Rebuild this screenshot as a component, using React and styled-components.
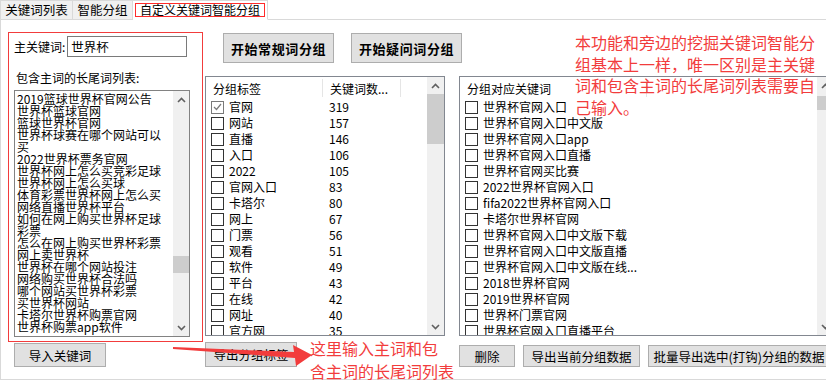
import React from "react";
import styled, { createGlobalStyle } from "styled-components";

const GlobalStyle = createGlobalStyle`
  html, body {
    margin: 0;
    padding: 0;
    background: #fff;
  }
  body {
    font-family: "Noto Sans CJK SC", "Liberation Sans", sans-serif;
    font-size: 12px;
    color: #000;
  }
`;

const Page = styled.div`
  position: relative;
  width: 826px;
  height: 388px;
  overflow: hidden;
  background: #fff;
`;

const TabBar = styled.div`
  display: flex;
  height: 20px;
  box-sizing: border-box;
`;

const Tab = styled.div`
  width: ${(p) => p.$w}px;
  height: 20px;
  box-sizing: border-box;
  display: flex;
  align-items: center;
  justify-content: center;
  font-size: 12.5px;
  line-height: 14px;
  white-space: nowrap;
  background: ${(p) => (p.$active ? "#fff" : "#f0f0f0")};
  border: 1px solid #d9d9d9;
  border-bottom: ${(p) => (p.$active ? "1px solid #fff" : "1px solid #d9d9d9")};
  border-left: ${(p) => (p.$first ? "1px solid #d9d9d9" : "none")};
`;

const TabMark = styled.span`
  border: 1px solid #ff2b2b;
  padding: 0 4px;
  font-size: 12px;
  line-height: 12px;
  white-space: nowrap;
`;

const TabFill = styled.div`
  flex: 1;
  border-bottom: 1px solid #d9d9d9;
`;

const Body = styled.div`
  display: flex;
  align-items: flex-start;
  height: 360px;
  box-sizing: border-box;
  border-left: 1px solid #d9d9d9;
  border-bottom: 1px solid #d9d9d9;
`;

const LeftCol = styled.div`
  margin-left: 7px;
  width: 195px;
  flex-shrink: 0;
`;

const RedBox = styled.div`
  margin-top: 12px;
  height: 310px;
  box-sizing: border-box;
  border: 1px solid #f23c3c;
  padding: 3px 5px;
`;

const InputRow = styled.div`
  display: flex;
  align-items: center;
  gap: 2px;
`;

const Label = styled.span`
  font-size: 12px;
  line-height: 14px;
  white-space: nowrap;
`;

const TextInput = styled.div`
  width: 120px;
  height: 21px;
  box-sizing: border-box;
  border: 1px solid #7a7a7a;
  padding: 0 3px;
  font-size: 12.5px;
  line-height: 19px;
`;

const SubLabel = styled(Label)`
  display: block;
  margin: 14px 0 0 2px;
`;

const ListBox = styled.div`
  margin-top: 5px;
  width: 176px;
  height: 247px;
  box-sizing: border-box;
  border: 1px solid #828282;
  display: flex;
`;

const ListText = styled.div`
  flex: 1;
  overflow: hidden;
  padding: 2px 0 0 2px;
  font-size: 12px;
  line-height: 12px;
  white-space: nowrap;
`;

const Scroll = styled.div`
  width: ${(p) => p.$w || 17}px;
  flex-shrink: 0;
  background: #f0f0f0;
  display: flex;
  flex-direction: column;
`;

const Arrow = styled.div`
  height: 17px;
  display: flex;
  align-items: center;
  justify-content: center;
`;

const Track = styled.div`
  flex: 1;
`;

const Thumb = styled.div`
  margin-top: ${(p) => p.$top}px;
  height: ${(p) => p.$h}px;
  background: #cdcdcd;
`;

const Button = styled.div`
  width: ${(p) => p.$w}px;
  height: ${(p) => p.$h || 24}px;
  box-sizing: border-box;
  background: #e1e1e1;
  border: 1px solid #adadad;
  display: flex;
  align-items: center;
  justify-content: center;
  font-size: ${(p) => (p.$bold ? "13px" : "12.5px")};
  font-weight: ${(p) => (p.$bold ? 700 : 400)};
  letter-spacing: ${(p) => (p.$bold ? "0.6px" : "0")};
  white-space: nowrap;
  flex-shrink: 0;
`;

const ImportButton = styled(Button)`
  margin: 1px 0 0 6px;
`;

const MidCol = styled.div`
  margin-left: 2px;
  width: 240px;
  flex-shrink: 0;
`;

const ButtonRow = styled.div`
  display: flex;
  gap: ${(p) => p.$gap}px;
  margin-top: ${(p) => p.$mt}px;
  padding-left: ${(p) => p.$pl || 0}px;
`;

const ListView = styled.div`
  margin-top: ${(p) => p.$mt}px;
  width: ${(p) => p.$w}px;
  height: 260px;
  box-sizing: border-box;
  border: 1px solid #828790;
  display: flex;
  background: #fff;
`;

const ListMain = styled.div`
  flex: 1;
  overflow: hidden;
`;

const Header = styled.div`
  display: flex;
  height: 22px;
  align-items: center;
`;

const HeadCell = styled.div`
  width: ${(p) => (p.$w ? `${p.$w}px` : "auto")};
  flex-shrink: 0;
  height: 18px;
  box-sizing: border-box;
  padding-left: 7px;
  padding-top: 2px;
  line-height: 16px;
  font-size: 12px;
  border-right: ${(p) => (p.$line ? "1px solid #e5e5e5" : "none")};
  white-space: nowrap;
`;

const Row = styled.div`
  display: flex;
  align-items: center;
  height: 16px;
  white-space: nowrap;
`;

const CheckBox = styled.div`
  width: 13px;
  height: 13px;
  box-sizing: border-box;
  margin-left: 5px;
  flex-shrink: 0;
  border: 1px solid ${(p) => (p.$checked ? "#7a7a7a" : "#333")};
  background: #fff;
  display: flex;
  align-items: center;
  justify-content: center;
`;

const Cell = styled.div`
  width: ${(p) => (p.$w ? `${p.$w}px` : "auto")};
  flex-shrink: 0;
  padding-left: 5px;
  font-size: 12px;
  line-height: 16px;
  overflow: hidden;
`;

const Count = styled.div`
  font-size: 12px;
  line-height: 16px;
  padding-left: 1px;
`;

const ExportButton = styled(Button)`
  margin-top: 6px;
`;

const RightCol = styled.div`
  margin-left: 14px;
  width: 380px;
  flex-shrink: 0;
`;

const Note = styled.div`
  position: absolute;
  left: ${(p) => p.$x}px;
  top: ${(p) => p.$y}px;
  color: #f23c3c;
  font-size: 16px;
  line-height: ${(p) => p.$lh}px;
  white-space: nowrap;
`;

const ArrowMark = styled.svg`
  position: absolute;
  left: 170px;
  top: 338px;
`;

const Chevron = ({ down }) => (
  <svg width="9" height="6" viewBox="0 0 9 6">
    <polyline
      points={down ? "1,1 4.5,4.5 8,1" : "1,5 4.5,1.5 8,5"}
      fill="none"
      stroke="#606060"
      strokeWidth="1.6"
    />
  </svg>
);

const ScrollBar = ({ top, h, w }) => (
  <Scroll $w={w}>
    <Arrow>
      <Chevron />
    </Arrow>
    <Track>
      <Thumb $top={top} $h={h} />
    </Track>
    <Arrow>
      <Chevron down />
    </Arrow>
  </Scroll>
);

const Check = ({ checked }) => (
  <CheckBox $checked={checked}>
    {checked && (
      <svg width="9" height="8" viewBox="0 0 9 8">
        <polyline points="1,4 3.5,6.5 8,1" fill="none" stroke="#7a7a7a" strokeWidth="1.2" />
      </svg>
    )}
  </CheckBox>
);

const longTail = [
  "2019篮球世界杯官网公告",
  "世界杯篮球官网",
  "篮球世界杯官网",
  "世界杯球赛在哪个网站可以",
  "买",
  "2022世界杯票务官网",
  "世界杯网上怎么买竞彩足球",
  "世界杯网上怎么买球",
  "体育彩票世界杯网上怎么买",
  "网络直播世界杯平台",
  "如何在网上购买世界杯足球",
  "彩票",
  "怎么在网上购买世界杯彩票",
  "网上卖世界杯",
  "世界杯在哪个网站投注",
  "网络购买世界杯合法吗",
  "哪个网站买世界杯彩票",
  "买世界杯网站",
  "卡塔尔世界杯购票官网",
  "世界杯购票app软件",
];

const groups = [
  ["官网", 319],
  ["网站", 157],
  ["直播", 146],
  ["入口", 106],
  ["2022", 105],
  ["官网入口", 83],
  ["卡塔尔", 80],
  ["网上", 67],
  ["门票", 56],
  ["观看", 51],
  ["软件", 49],
  ["平台", 43],
  ["在线", 42],
  ["网址", 40],
  ["官方网", 35],
];

const keywords = [
  "世界杯官网入口",
  "世界杯官网入口中文版",
  "世界杯官网入口app",
  "世界杯官网入口直播",
  "世界杯官网买比赛",
  "2022世界杯官网入口",
  "fifa2022世界杯官网入口",
  "卡塔尔世界杯官网",
  "世界杯官网入口中文版下载",
  "世界杯官网入口中文版直播",
  "世界杯官网入口中文版在线...",
  "2018世界杯官网",
  "2019世界杯官网",
  "世界杯门票官网",
  "世界杯官网入口直播平台",
];

export default function App() {
  return (
    <Page>
      <GlobalStyle />
      <TabBar>
        <Tab $w={73} $first>关键词列表</Tab>
        <Tab $w={60}>智能分组</Tab>
        <Tab $w={135} $active>
          <TabMark>自定义关键词智能分组</TabMark>
        </Tab>
        <TabFill />
      </TabBar>
      <Body>
        <LeftCol>
          <RedBox>
            <InputRow>
              <Label>主关键词:</Label>
              <TextInput>世界杯</TextInput>
            </InputRow>
            <SubLabel>包含主词的长尾词列表:</SubLabel>
            <ListBox>
              <ListText>
                {longTail.map((t, i) => (
                  <div key={i}>{t}</div>
                ))}
              </ListText>
              <ScrollBar top={148} h={17} w={16} />
            </ListBox>
          </RedBox>
          <ImportButton $w={92}>导入关键词</ImportButton>
        </LeftCol>

        <MidCol>
          <ButtonRow $gap={17} $mt={13} $pl={18}>
            <Button $w={111} $h={30} $bold>开始常规词分组</Button>
            <Button $w={111} $h={30} $bold>开始疑问词分组</Button>
          </ButtonRow>
          <ListView $mt={13} $w={240}>
            <ListMain>
              <Header>
                <HeadCell $w={117} $line>分组标签</HeadCell>
                <HeadCell $w={78} $line>关键词数...</HeadCell>
              </Header>
              {groups.map(([name, n], i) => (
                <Row key={name}>
                  <Check checked={i === 0} />
                  <Cell $w={99}>{name}</Cell>
                  <Count>{n}</Count>
                </Row>
              ))}
            </ListMain>
            <ScrollBar top={0} h={50} />
          </ListView>
          <ExportButton $w={92} $h={25}>导出分组标签</ExportButton>
        </MidCol>

        <RightCol>
          <ListView $mt={56} $w={376}>
            <ListMain>
              <Header>
                <HeadCell $w={187} $line>分组对应关键词</HeadCell>
              </Header>
              {keywords.map((k) => (
                <Row key={k}>
                  <Check />
                  <Cell>{k}</Cell>
                </Row>
              ))}
            </ListMain>
            <ScrollBar top={2} h={14} />
          </ListView>
          <ButtonRow $gap={8} $mt={9}>
            <Button $w={56} $h={22}>删除</Button>
            <Button $w={117} $h={22}>导出当前分组数据</Button>
            <Button $w={182} $h={22}>批量导出选中(打钩)分组的数据</Button>
          </ButtonRow>
        </RightCol>
      </Body>

      <Note $x={575} $y={32} $lh={21.5}>
        <div>本功能和旁边的挖掘关键词智能分</div>
        <div>组基本上一样，唯一区别是主关键</div>
        <div>词和包含主词的长尾词列表需要自</div>
        <div>己输入。</div>
      </Note>
      <ArrowMark width="145" height="32" viewBox="0 0 145 32">
        <polygon
          points="3,9 124,14 123,7 142,17 126,28 125,20 3,11"
          fill="#f23c3c"
        />
      </ArrowMark>
      <Note $x={310} $y={337} $lh={23}>
        <div>这里输入主词和包</div>
        <div>含主词的长尾词列表</div>
      </Note>
    </Page>
  );
}
